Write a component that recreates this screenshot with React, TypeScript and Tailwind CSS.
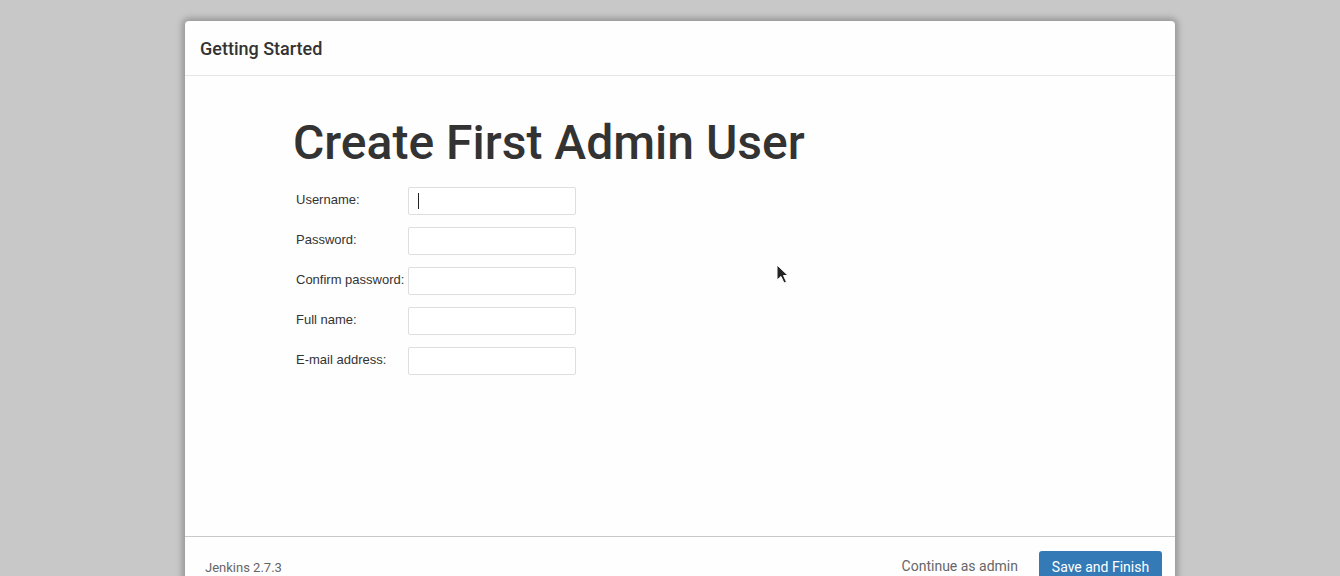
import React from "react";

const fields = ["Username:", "Password:", "Confirm password:", "Full name:", "E-mail address:"];

export default function App() {
  return (
    <div className="relative h-[576px] w-[1340px] overflow-hidden bg-[#c8c8c8] pt-[21px] pl-[185px]">
      <div className="flex h-[600px] w-[990px] flex-col rounded-t-[4px] bg-[#fefefe] shadow-[0_0_6px_3px_rgba(0,0,0,0.25)]">
        <div className="flex h-[55px] items-center border-b border-[#e5e5e5] px-[15px]">
          <span className="text-[18px] font-medium text-[#333]" style={{ fontFamily: "Roboto, sans-serif" }}>
            Getting Started
          </span>
        </div>
        <div className="h-[461px] border-b border-[#c8c8c8] pl-[108px] pt-[35px]">
          <h1 className="text-[48px] font-medium leading-[64px] text-[#333]" style={{ fontFamily: "Roboto, sans-serif" }}>
            Create First Admin User
          </h1>
          <div className="mt-[12px] flex flex-col gap-[12px] pl-[3px]" style={{ fontFamily: "'Liberation Sans', Arial, sans-serif" }}>
            {fields.map((f, i) => (
              <div key={f} className="flex items-center">
                <label className="mb-[2px] w-[112px] text-[13px] text-[#333]">{f}</label>
                <div className="relative h-[28px] w-[168px] rounded-[2px] border border-[#dedede] bg-white">
                  {i === 0 && <div className="absolute left-[9px] top-[5px] h-[16px] w-px bg-[#222]" />}
                </div>
              </div>
            ))}
          </div>
        </div>
        <div className="flex items-start justify-between pl-[20px] pr-[13px] pt-[14px]" style={{ fontFamily: "Roboto, sans-serif" }}>
          <span className="pt-[7px] text-[13px] leading-[20px] text-[#666]">Jenkins 2.7.3</span>
          <div className="flex items-start gap-[21px]">
            <span className="pt-[5px] text-[14px] leading-[20px] text-[#666]">Continue as admin</span>
            <button className="h-[34px] w-[123px] rounded-[3px] bg-[#337ab7] pb-[2px] text-[14px] leading-[20px] text-white">Save and Finish</button>
          </div>
        </div>
      </div>
      <svg className="absolute left-[776px] top-[264px]" width="14" height="22" viewBox="0 0 14 22">
        <path d="M1 1 L1 16 L5 12.5 L8 19 L10.5 18 L7.5 11.5 L12 11.5 Z" fill="#222" stroke="#fff" strokeWidth="1" />
      </svg>
    </div>
  );
}
